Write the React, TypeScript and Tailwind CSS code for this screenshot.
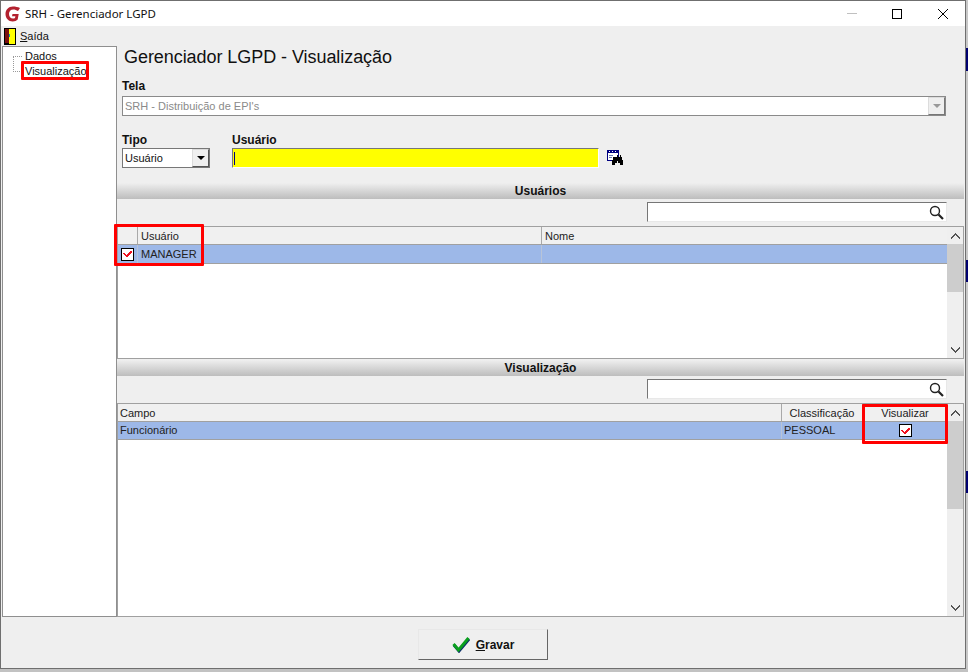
const UI_FONT = "font-['Liberation_Sans',sans-serif]";

function DoorIcon() {
  return (
    <svg width="12" height="17" viewBox="0 0 12 17" shapeRendering="crispEdges">
      <rect x="0" y="0" width="12" height="17" fill="#000" />
      <rect x="4" y="1" width="7" height="15" fill="#ffff00" />
      <rect x="1" y="1" width="4" height="14" fill="#7a1010" />
      <rect x="4" y="15" width="1" height="2" fill="#000" />
      <rect x="5" y="6" width="1" height="3" fill="#00a8a8" />
    </svg>
  );
}

function Logo() {
  return (
    <svg width="16" height="16" viewBox="0 0 16 16">
      <path d="M8 0.5C3.5 0.5 0.5 3.8 0.5 8s3 7.5 7.2 7.5c2.2 0 3.8-.8 5-2l1-5.5H7.5L7 10.200h3.400l-.4 1.800c-.6.4-1.300.6-2 .6-2.500 0-4-2-4-4.600S5.600 3.400 8.400 3.400c1.500 0 3 .5 4.600 1.600l2-3C12.800 1 10.500.5 8 .5z" fill="#b3212f" />
    </svg>
  );
}

function Binoculars() {
  return (
    <svg width="17" height="16" viewBox="0 0 17 16" shapeRendering="crispEdges">
      <rect x="0.500" y="0.500" width="11" height="10" fill="#fff" stroke="#000080" />
      <rect x="0" y="0" width="12" height="3" fill="#000080" />
      <rect x="2" y="1" width="1" height="1" fill="#fff" />
      <rect x="5" y="1" width="1" height="1" fill="#fff" />
      <rect x="8" y="1" width="1" height="1" fill="#fff" />
      <rect x="2" y="5" width="4" height="1" fill="#6b7bb0" />
      <rect x="2" y="7" width="3" height="1" fill="#6b7bb0" />
      <path d="M6 7h4v-2h1v2h2v-2h1v2h1l1 6v2h-3v-2h-2v-2h-1v2h-2v2h-3v-2z" fill="#000" />
    </svg>
  );
}

function SearchGlyph() {
  return (
    <svg width="15" height="15" viewBox="0 0 15 15" fill="none">
      <circle cx="6" cy="6" r="4.500" stroke="#222" strokeWidth="1.400" />
      <path d="M9.500 9.500L14 14" stroke="#222" strokeWidth="2.200" />
    </svg>
  );
}

function GreenCheck() {
  return (
    <svg width="18" height="17" viewBox="0 0 18 17" fill="none">
      <path d="M2 9l5 6L17 3" stroke="#0a2a6a" strokeWidth="3" />
      <path d="M1.500 8l5 6L16.500 2" stroke="#0aa01e" strokeWidth="3" />
    </svg>
  );
}

function CheckBox() {
  return (
    <span className="flex h-[13px] w-[13px] items-center justify-center border border-black bg-white">
      <svg width="9" height="8" viewBox="0 0 9 8" shapeRendering="crispEdges">
        <path d="M0 3h2v1h1v1h1v-1h1v-1h1v-1h1v-1h2v2h-1v1h-1v1h-1v1h-1v1h-2v-1h-1v-1h-1v-1h-1z" fill="#f01020" />
      </svg>
    </span>
  );
}

function ChevronGlyph({ down }: { down?: boolean }) {
  return (
    <svg width="9" height="6" viewBox="0 0 9 6" shapeRendering="crispEdges" className={down ? 'rotate-180' : ''}>
      <path d="M4 0h1v1h1v1h1v1h1v1h1v2h-1v-1h-1v-1h-1v-1h-1v-1h-1v1h-1v1h-1v1h-1v1h-1v-2h1v-1h1v-1h1v-1h1z" fill="#555" />
    </svg>
  );
}

function ScrollBar({ thumb }: { thumb: string }) {
  return (
    <div className="flex w-[16px] shrink-0 flex-col bg-[#efefef]">
      <div className="flex h-[17px] items-center justify-center">
        <ChevronGlyph />
      </div>
      <div className="flex-1">
        <div className={`bg-[#cdcdcd] ${thumb}`} />
      </div>
      <div className="flex h-[17px] items-center justify-center">
        <ChevronGlyph down />
      </div>
    </div>
  );
}

function SectionHeader({ title }: { title: string }) {
  return (
    <div className="flex h-[16px] items-center justify-center bg-gradient-to-b from-[#efefef] to-[#bdbdbd] text-[12px] font-bold text-[#111]">
      {title}
    </div>
  );
}

function SearchBox() {
  return (
    <div className="flex justify-end pr-[17px]">
      <div className="flex h-[20px] w-[300px] items-center justify-end border border-[#e8e8e8] border-t-[#767676] border-l-[#767676] bg-white pr-[2px]">
        <SearchGlyph />
      </div>
    </div>
  );
}

function HeaderCell({ label, className }: { label: string; className: string }) {
  return <div className={`flex items-center border-r border-[#a9a9a9] pt-px ${className}`}>{label}</div>;
}

function UsersGrid() {
  return (
    <div className="relative flex h-[133px] border border-[#a0a0a0] bg-white">
      <div className="flex-1 text-[11px] text-[#222]">
        <div className="flex h-[18px] border-b border-[#a0a0a0] bg-[#f0f0f0]">
          <HeaderCell label="" className="w-[20px]" />
          <HeaderCell label="Usuário" className="w-[404px] pl-[3px]" />
          <div className="flex items-center pl-[3px] pt-px">Nome</div>
        </div>
        <div className="flex h-[19px] border-b border-[#a0a0a0] bg-[#9db8e8]">
          <div className="flex w-[20px] items-center justify-center border-r border-[#b8c4d8]">
            <CheckBox />
          </div>
          <div className="flex w-[404px] items-center border-r border-[#b8c4d8] pl-[3px]">MANAGER</div>
        </div>
      </div>
      <ScrollBar thumb="h-[48px]" />
      <div className="absolute -left-[4px] -top-[3px] h-[42px] w-[90px] rounded-[1px] border-[3px] border-[#ff0000]" />
    </div>
  );
}

function FieldsGrid() {
  return (
    <div className="relative flex h-[214px] border border-[#a0a0a0] bg-white">
      <div className="flex-1 text-[11px] text-[#222]">
        <div className="flex h-[18px] border-b border-[#a0a0a0] bg-[#f0f0f0]">
          <HeaderCell label="Campo" className="w-[664px] pl-[2px]" />
          <HeaderCell label="Classificação" className="w-[81px] justify-center" />
          <div className="flex flex-1 items-center justify-center pt-px">Visualizar</div>
        </div>
        <div className="flex h-[18px] border-b border-[#a0a0a0] bg-[#9db8e8]">
          <div className="flex w-[664px] items-center border-r border-[#b8c4d8] pl-[2px]">Funcionário</div>
          <div className="flex w-[81px] items-center border-r border-[#b8c4d8] pl-[2px]">PESSOAL</div>
          <div className="flex flex-1 items-center justify-center">
            <CheckBox />
          </div>
        </div>
      </div>
      <ScrollBar thumb="h-[88px]" />
      <div className="absolute left-[744px] top-0 h-[40px] w-[86px] rounded-[1px] border-[3px] border-[#ff0000]" />
    </div>
  );
}

export default function App() {
  return (
    <div className={`flex h-[672px] w-[968px] overflow-hidden bg-[#c2c2c2] ${UI_FONT}`}>
      <div className="flex h-[669px] w-[966px] shrink-0 flex-col border border-[#6f6f6f] bg-[#efefef]">
        {/* Title bar */}
        <div className="flex h-[25px] shrink-0 items-center bg-white text-[#111]">
          <div className="ml-[4px] mr-[4px]">
            <Logo />
          </div>
          <span className="font-['Noto_Sans',sans-serif] text-[11.5px]">SRH - Gerenciador LGPD</span>
          <div className="ml-auto flex items-center">
            <div className="mr-[35px] h-px w-[10px] bg-[#c0c0c0]" />
            <div className="mr-[36px] h-[10px] w-[10px] border border-black" />
            <svg width="10" height="10" viewBox="0 0 10 10" className="mr-[17px]">
              <path d="M0 0L10 10M10 0L0 10" stroke="#000" strokeWidth="1" />
            </svg>
          </div>
        </div>

        {/* Menu */}
        <div className="flex h-[20px] shrink-0 items-center gap-[4px] pl-[3px] text-[11px] text-[#111]">
          <DoorIcon />
          <span>
            <span className="underline">S</span>aída
          </span>
        </div>

        <div className="flex min-h-0 flex-1">
          {/* Tree */}
          <div className="relative ml-px h-[571px] w-[115px] shrink-0 border border-[#8f8f8f] bg-white pt-[2px] text-[11px] text-[#111]">
            <div className="absolute left-[10px] top-[9px] h-[16px] border-l border-dotted border-[#999]" />
            <div className="flex h-[14px] items-center pl-[10px]">
              <span className="mr-[3px] w-[9px] border-t border-dotted border-[#999]" />
              Dados
            </div>
            <div className="flex h-[17px] items-center pl-[10px]">
              <span className="mr-[3px] w-[9px] border-t border-dotted border-[#999]" />
              <span className="relative">
                Visualização
                <span className="absolute -left-[4px] -top-[2px] h-[19px] w-[68px] rounded-[1px] border-[3px] border-[#ff0000]" />
              </span>
            </div>
          </div>

          {/* Content */}
          <div className="mr-px flex min-w-0 flex-1 flex-col">
            <div className="pl-[5px]">
              <h1 className="ml-[2px] mt-[1px] h-[20px] text-[18px] leading-[20px] tracking-[-0.06px] text-[#111]">Gerenciador LGPD - Visualização</h1>
              <div className="mt-[12px] text-[12px] font-bold leading-[14px] text-[#111]">Tela</div>
              <div className="mr-[18px] mt-[3px] flex h-[20px] items-center justify-between border border-[#8a8a8a] bg-white pl-[2px] text-[11px] text-[#8a8a8a]">
                <span>SRH - Distribuição de EPI's</span>
                <span className="flex h-[18px] w-[17px] items-center justify-center border border-[#dcdcdc] border-b-[#777] border-r-[#777] bg-[#efefef]">
                  <span className="h-0 w-0 border-x-[4px] border-t-[4px] border-x-transparent border-t-[#999]" />
                </span>
              </div>

              <div className="mt-[17px] flex gap-[22px] text-[#111]">
                <div className="w-[88px]">
                  <div className="text-[12px] font-bold leading-[14px]">Tipo</div>
                  <div className="mt-px flex h-[20px] items-center justify-between border border-[#777] bg-white pl-[2px] text-[11px]">
                    <span>Usuário</span>
                    <span className="flex h-[18px] w-[17px] items-center justify-center border border-[#dcdcdc] border-b-[#555] border-r-[#555] bg-[#efefef]">
                      <span className="h-0 w-0 border-x-[4px] border-t-[4px] border-x-transparent border-t-black" />
                    </span>
                  </div>
                </div>
                <div>
                  <div className="text-[12px] font-bold leading-[14px]">Usuário</div>
                  <div className="mt-px flex items-center gap-[8px]">
                    <div className="flex h-[20px] w-[367px] items-center border border-[#777] border-b-white border-r-white bg-[#ffff00] pl-[1px]">
                      <span className="h-[13px] w-px bg-[#000080]" />
                    </div>
                    <Binoculars />
                  </div>
                </div>
              </div>
            </div>

            <div className="mt-[15px] flex flex-col">
              <SectionHeader title="Usuários" />
              <div className="mt-[3px]">
                <SearchBox />
              </div>
              <div className="mt-[4px]">
                <UsersGrid />
              </div>
              <div className="mt-[1px]">
                <SectionHeader title="Visualização" />
              </div>
              <div className="mt-[3px]">
                <SearchBox />
              </div>
              <div className="mt-[4px]">
                <FieldsGrid />
              </div>
            </div>

            {/* Footer */}
            <div className="flex flex-1 justify-center pr-[115px] pt-[12px]">
              <button className="flex h-[31px] w-[130px] items-center justify-center gap-[6px] border border-[#e8e8e8] border-b-[#666] border-r-[#666] bg-[#efefef] text-[12px] font-bold text-[#111]">
                <GreenCheck />
                <span>
                  <span className="underline">G</span>ravar
                </span>
              </button>
            </div>
          </div>
        </div>
      </div>

      {/* What shows of the window behind */}
      <div className="flex h-[669px] flex-1 flex-col bg-[#c8c8c8]">
        <div className="mt-[48px] h-[23px] bg-[#000070]" />
        <div className="mt-[189px] h-[22px] bg-[#000070]" />
        <div className="mt-[189px] h-[22px] bg-[#000070]" />
      </div>
    </div>
  );
}
